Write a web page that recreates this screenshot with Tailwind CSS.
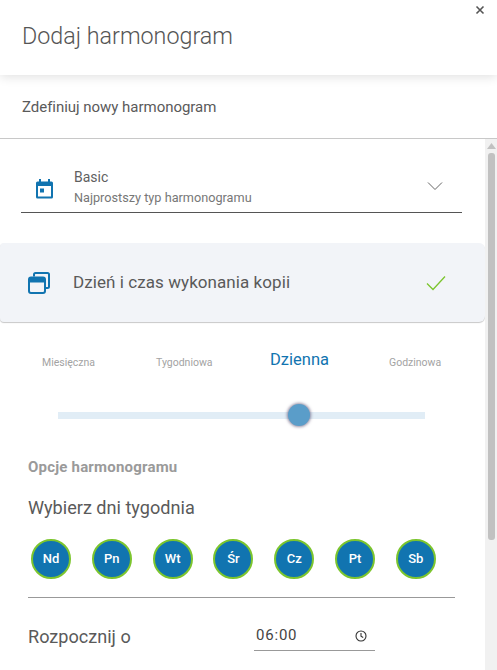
<!DOCTYPE html>
<html lang="en">
<head>
  <meta charset="UTF-8" />
  <title>Dodaj harmonogram</title>
  <script src="https://cdn.jsdelivr.net/npm/@tailwindcss/browser@4"></script>
</head>
<body class="h-[670px] w-[497px] overflow-hidden bg-white font-['Roboto',sans-serif] text-[#5a5a5a]">
  <div class="relative flex h-[670px] flex-col">
    <!-- Close -->
    <button class="absolute right-[12px] top-[5px] z-20 text-[#555]">
      <svg class="h-[10px] w-[10px]" viewBox="0 0 10 10" fill="none" stroke="currentColor" stroke-width="1.6"><path d="M1.5 1.5l7 7M8.5 1.5l-7 7"/></svg>
    </button>

    <!-- Header -->
    <div class="relative z-10 flex h-[75px] shrink-0 items-center bg-white pl-[22px] pb-[3px] shadow-[0_2px_10px_rgba(0,0,0,0.12)]">
      <h1 class="text-[23.3px] font-light text-[#555]">Dodaj harmonogram</h1>
    </div>

    <!-- Subheader -->
    <div class="flex h-[64px] shrink-0 items-center border-b border-[#c8c8c8] pl-[22px] pt-[2px]">
      <p class="text-[15px] tracking-[-0.03px] text-[#5a5a5a]">Zdefiniuj nowy harmonogram</p>
    </div>

    <div class="flex min-h-0 flex-1">
      <!-- Content -->
      <div class="w-[485px] shrink-0">
        <!-- Schedule type select -->
        <div class="ml-[21px] mr-[23px] mt-[27px] flex h-[47px] items-start border-b border-[#555] pl-[14px] pr-[19px]">
          <svg class="mt-[12px] h-[22px] w-[19px] shrink-0 text-[#1174b0]" viewBox="0 0 19 22" fill="currentColor">
            <path fill-rule="evenodd" d="M4 1h2v2.5h7V1h2v2.5h1.5A1.5 1.5 0 0 1 18 5v14a1.5 1.5 0 0 1-1.5 1.5h-14A1.5 1.5 0 0 1 1 19V5a1.5 1.5 0 0 1 1.5-1.5H4V1zM3 8v10.5h13V8H3z"/>
            <rect x="5" y="10.5" width="4" height="4"/>
          </svg>
          <div class="ml-[20px] mt-[2px] flex-1">
            <div class="text-[14px] leading-[18px] text-[#5f5f5f]">Basic</div>
            <div class="mt-[4px] text-[12.7px] leading-[16px] text-[#777]">Najprostszy typ harmonogramu</div>
          </div>
          <svg class="mt-[15px] h-[10px] w-[16px] text-[#666]" viewBox="0 0 16 10" fill="none" stroke="currentColor" stroke-width="1"><path d="M1 1.5l7 7 7-7"/></svg>
        </div>

        <!-- Step card -->
        <div class="mt-[30px] flex h-[79px] items-center rounded-r-[6px] rounded-l-[4px] bg-[#f2f4f8] pl-[28px] pr-[39px] shadow-[0_1px_1px_rgba(0,0,0,0.22)]">
          <svg class="h-[22px] w-[22px] shrink-0 text-[#1174b0]" viewBox="0 0 22 22" fill="none">
            <path d="M6 4.5V2.5A1.5 1.5 0 0 1 7.5 1h12A1.5 1.5 0 0 1 21 2.5v12a1.5 1.5 0 0 1-1.5 1.5H18" stroke="currentColor" stroke-width="2"/>
            <rect x="1" y="5.5" width="16" height="15.5" rx="2" stroke="currentColor" stroke-width="2"/>
            <path d="M1 6.5A1.5 1.5 0 0 1 2.5 5h13A1.5 1.5 0 0 1 17 6.5V10.5H1z" fill="currentColor"/>
          </svg>
          <span class="ml-[23px] flex-1 text-[17px] tracking-[0.07px] text-[#5a5a5a]">Dzień i czas wykonania kopii</span>
          <svg class="h-[16px] w-[20px] text-[#7cc52e]" viewBox="0 0 20 16" fill="none" stroke="currentColor" stroke-width="1.3"><path d="M1 8.5l6 6L19 1.5"/></svg>
        </div>

        <!-- Frequency -->
        <div class="relative mt-[28px] h-[24px] text-[#a3a3a3]">
          <span class="absolute left-[42px] top-[6px] text-[10.5px] leading-[14px]">Miesięczna</span>
          <span class="absolute left-[156px] top-[6px] text-[10.5px] leading-[14px]">Tygodniowa</span>
          <span class="absolute left-[270px] top-0 text-[16.5px] leading-[20px] text-[#1174b0]">Dzienna</span>
          <span class="absolute left-[389px] top-[6px] text-[10.5px] leading-[14px]">Godzinowa</span>
        </div>

        <!-- Slider -->
        <div class="relative ml-[58px] mr-[60px] mt-[38px] h-[7px] bg-[#e1edf6]">
          <div class="absolute left-[230px] top-[-8px] h-[22px] w-[22px] rounded-full bg-[#5a9dc9] shadow-[0_0_3px_1px_rgba(60,50,90,0.55)]"></div>
        </div>

        <!-- Options -->
        <div class="px-[28px]">
          <h2 class="mt-[40px] text-[15px] font-bold leading-[16px] tracking-[0.2px] text-[#9a9a9a]">Opcje harmonogramu</h2>
          <p class="mt-[21px] text-[18.1px] leading-[24px] text-[#5a5a5a]">Wybierz dni tygodnia</p>
          <div class="mt-[19px] flex w-[427px] gap-[20.8px] border-b border-[#999] pb-[18px] pl-[3px] text-[13px] font-medium text-white">
            <span class="flex h-[40px] w-[40px] items-center justify-center rounded-full border-[2.5px] border-[#7cc52e] bg-[#1174b0]">Nd</span>
            <span class="flex h-[40px] w-[40px] items-center justify-center rounded-full border-[2.5px] border-[#7cc52e] bg-[#1174b0]">Pn</span>
            <span class="flex h-[40px] w-[40px] items-center justify-center rounded-full border-[2.5px] border-[#7cc52e] bg-[#1174b0]">Wt</span>
            <span class="flex h-[40px] w-[40px] items-center justify-center rounded-full border-[2.5px] border-[#7cc52e] bg-[#1174b0]">Śr</span>
            <span class="flex h-[40px] w-[40px] items-center justify-center rounded-full border-[2.5px] border-[#7cc52e] bg-[#1174b0]">Cz</span>
            <span class="flex h-[40px] w-[40px] items-center justify-center rounded-full border-[2.5px] border-[#7cc52e] bg-[#1174b0]">Pt</span>
            <span class="flex h-[40px] w-[40px] items-center justify-center rounded-full border-[2.5px] border-[#7cc52e] bg-[#1174b0]">Sb</span>
          </div>
          <div class="mt-[23px] flex items-start">
            <span class="mt-[4px] w-[226px] text-[18.1px] leading-[24px] text-[#5a5a5a]">Rozpocznij o</span>
            <div class="flex h-[30px] w-[121px] items-center justify-between border-b border-[#999] pl-[2px] pr-[8px] text-[15px] tracking-[0.8px] text-[#444]">
              <span>06:00</span>
              <svg class="h-[12px] w-[12px] text-[#333]" viewBox="0 0 12 12" fill="none" stroke="currentColor" stroke-width="1.1"><circle cx="6" cy="6" r="5"/><path d="M6 3v3.2l2.2 1.3"/></svg>
            </div>
          </div>
        </div>
      </div>

      <!-- Scrollbar -->
      <div class="flex w-[12px] shrink-0 flex-col items-center bg-[#f1f1f1] pl-[1px]">
        <svg class="mt-[4px] h-[6px] w-[9px] text-[#c1c1c1]" viewBox="0 0 9 6" fill="currentColor"><path d="M4.5 0L9 6H0z"/></svg>
        <div class="mt-[4px] h-[387px] w-[7px] rounded-[3px] bg-[#c1c1c1]"></div>
      </div>
    </div>
  </div>
</body>
</html>
